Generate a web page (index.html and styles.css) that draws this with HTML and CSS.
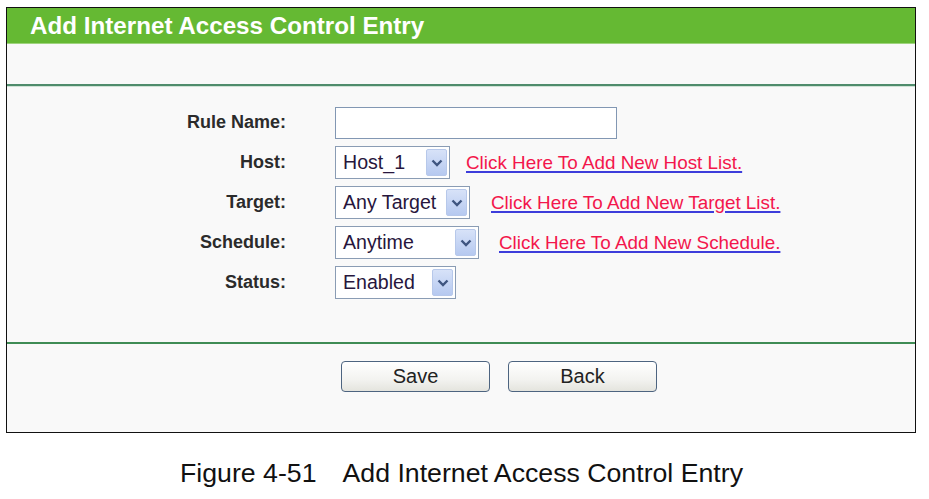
FILE: index.html
```html
<!DOCTYPE html>
<html>
<head>
<meta charset="utf-8">
<link rel="stylesheet" href="styles.css">
</head>
<body>
<div class="panel">
  <div class="panel-header">Add Internet Access Control Entry</div>
  <div class="subbar"></div>
  <div class="form">
    <div class="label">Rule Name:</div>
    <div class="field"><div class="textbox"></div></div>

    <div class="label">Host:</div>
    <div class="field">
      <div class="select w-host"><span class="value">Host_1</span><span class="arrow"><svg width="12" height="8" viewBox="0 0 12 8"><path d="M1.5 1.5 L6 6 L10.5 1.5" fill="none" stroke="#3f5580" stroke-width="2.4"/></svg></span></div>
      <a class="link gap-host" href="#">Click Here To Add New Host List.</a>
    </div>

    <div class="label">Target:</div>
    <div class="field">
      <div class="select w-target"><span class="value">Any Target</span><span class="arrow"><svg width="12" height="8" viewBox="0 0 12 8"><path d="M1.5 1.5 L6 6 L10.5 1.5" fill="none" stroke="#3f5580" stroke-width="2.4"/></svg></span></div>
      <a class="link gap-target" href="#">Click Here To Add New Target List.</a>
    </div>

    <div class="label">Schedule:</div>
    <div class="field">
      <div class="select w-schedule"><span class="value">Anytime</span><span class="arrow"><svg width="12" height="8" viewBox="0 0 12 8"><path d="M1.5 1.5 L6 6 L10.5 1.5" fill="none" stroke="#3f5580" stroke-width="2.4"/></svg></span></div>
      <a class="link gap-schedule" href="#">Click Here To Add New Schedule.</a>
    </div>

    <div class="label">Status:</div>
    <div class="field">
      <div class="select w-status"><span class="value">Enabled</span><span class="arrow"><svg width="12" height="8" viewBox="0 0 12 8"><path d="M1.5 1.5 L6 6 L10.5 1.5" fill="none" stroke="#3f5580" stroke-width="2.4"/></svg></span></div>
    </div>
  </div>
  <div class="footer">
    <div class="buttons">
      <button class="btn">Save</button>
      <button class="btn">Back</button>
    </div>
  </div>
</div>
<div class="caption"><span class="fig">Figure 4-51</span><span>Add Internet Access Control Entry</span></div>
</body>
</html>
```

FILE: styles.css
```css
html, body {
  margin: 0;
  padding: 0;
  background: #ffffff;
  font-family: "Liberation Sans", Arial, sans-serif;
}

.panel {
  margin: 7px 0 0 6px;
  width: 908px;
  border: 1px solid #111;
  background: #f9f9f9;
}

.panel-header {
  height: 36px;
  line-height: 36px;
  background: #65b933;
  color: #ffffff;
  font-weight: bold;
  font-size: 24.2px;
  padding-left: 23px;
  border-bottom: 1px solid #9fd47e;
  box-sizing: border-box;
}

.subbar {
  height: 40px;
  background: #f9f9f9;
  border-bottom: 2px solid #4f8c6c;
  box-shadow: 0 1px 0 #cfe3d6;
}

.form {
  display: grid;
  grid-template-columns: 279px 1fr;
  column-gap: 49px;
  grid-auto-rows: 33px;
  row-gap: 7px;
  padding: 20px 0 43px 0;
  border-bottom: 2px solid #3f8c55;
}

.label {
  font-weight: bold;
  font-size: 18px;
  color: #2b2b2b;
  text-align: right;
  align-self: center;
  line-height: 20px;
  margin-top: -2px;
}

.field {
  display: flex;
  align-items: center;
}

.textbox {
  width: 280px;
  height: 30px;
  background: #ffffff;
  border: 1px solid #8297b3;
}

.select {
  background: #ffffff;
  border: 1px solid #8a9cb4;
  display: flex;
  align-items: center;
  justify-content: space-between;
  padding: 0 2px 0 7px;
  box-sizing: border-box;
  height: 33px;
}

.value {
  font-size: 19.6px;
  color: #27163d;
}

.arrow {
  width: 21px;
  height: 27px;
  box-sizing: border-box;
  border: 1px solid #b7c8ea;
  border-radius: 2px;
  background: linear-gradient(#d7e2f8, #b6c9f0);
  display: flex;
  align-items: center;
  justify-content: center;
}

.w-host { width: 115px; }
.w-target { width: 135px; }
.w-schedule { width: 144px; }
.w-status { width: 121px; }

.link {
  font-size: 18.85px;
  color: #f3164c;
  text-decoration: underline;
  text-decoration-color: #3d3ddb;
  text-decoration-thickness: 2px;
  text-underline-offset: 2px;
}

.gap-host { margin-left: 16px; }
.gap-target { margin-left: 21px; }
.gap-schedule { margin-left: 20px; }

.footer {
  padding: 17px 0 40px 334px;
}

.buttons {
  display: flex;
  gap: 18px;
}

.btn {
  width: 149px;
  height: 31px;
  border: 1px solid #4d6480;
  border-radius: 4px;
  background: linear-gradient(#ffffff, #f3f3f0 60%, #e4e4de);
  font-family: "Liberation Sans", Arial, sans-serif;
  font-size: 20px;
  color: #222;
  padding: 0;
}

.caption {
  margin-top: 25px;
  padding-left: 180px;
  font-size: 26.7px;
  color: #111;
  line-height: 30px;
}

.fig {
  margin-right: 26px;
}
```
